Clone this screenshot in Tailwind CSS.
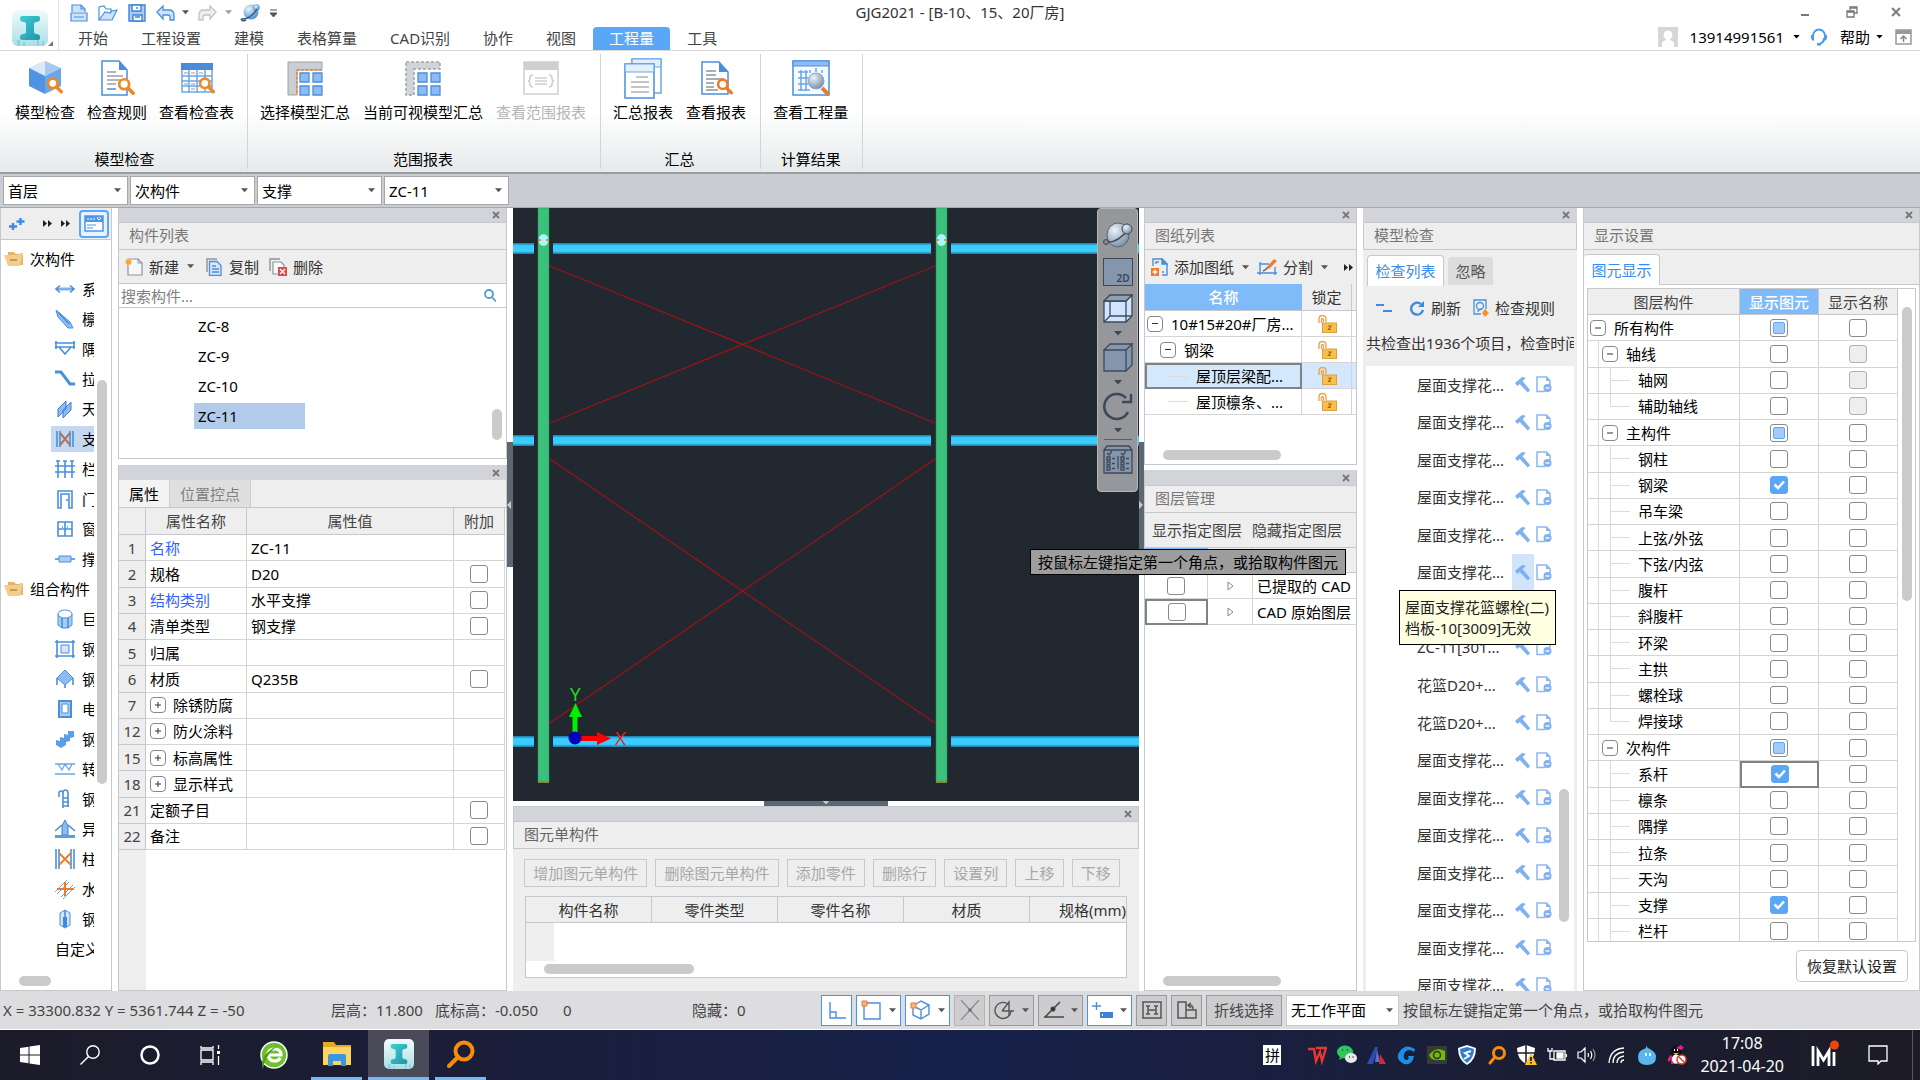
<!DOCTYPE html>
<html lang="zh-CN" class="h-full">

<head>
    <meta charset="UTF-8">
    <meta name="viewport" content="width=device-width, initial-scale=1.0">
    <title>GJG2021 - [B-10、15、20厂房]</title>
    <script src="https://cdn.jsdelivr.net/npm/@tailwindcss/browser@4"></script>
</head>

<body class="flex h-screen flex-col overflow-hidden bg-white font-['Noto_Sans','Noto_Sans_CJK_SC',sans-serif] text-[15px] leading-5 text-black whitespace-nowrap">

    <!-- Shared icons -->
    <svg class="absolute h-0 w-0" aria-hidden="true">
        <defs>
            <linearGradient id="tile" x1="0" y1="0" x2="0" y2="1">
                <stop offset="0" stop-color="#f2fbfc" />
                <stop offset="1" stop-color="#a9dfe4" />
            </linearGradient>
            <linearGradient id="teal" x1="0" y1="0" x2="1" y2="1">
                <stop offset="0" stop-color="#3fd0d4" />
                <stop offset="1" stop-color="#1f93ad" />
            </linearGradient>
            <linearGradient id="beam" x1="0" y1="0" x2="0" y2="1">
                <stop offset="0" stop-color="#1878a6" />
                <stop offset="0.25" stop-color="#3ccbff" />
                <stop offset="0.75" stop-color="#3ccbff" />
                <stop offset="1" stop-color="#1878a6" />
            </linearGradient>
            <radialGradient id="ball" cx="0.35" cy="0.3" r="0.8">
                <stop offset="0" stop-color="#eef3f8" />
                <stop offset="1" stop-color="#6f86a2" />
            </radialGradient>
            <radialGradient id="blueball" cx="0.35" cy="0.3" r="0.8">
                <stop offset="0" stop-color="#e8f5ff" />
                <stop offset="1" stop-color="#3a86c8" />
            </radialGradient>
        </defs>
        <symbol id="logo" viewBox="0 0 36 36">
            <rect width="36" height="36" rx="6" fill="url(#tile)" />
            <path d="M5 36v-6h3v6zM11 36v-4h2v4zM25 36v-8h2v8zM30 36v-5h2v5z" fill="#8fd3da" />
            <path d="M10 6h16q2 0 2 2v1q0 3-4 3-2 0-2 3v6q0 3 2 3 4 0 4 3v1q0 2-2 2H10q-2 0-2-2v-1q0-3 4-3 2 0 2-3v-6q0-3-2-3-4 0-4-3V8q0-2 2-2z" fill="url(#teal)" />
        </symbol>
        <symbol id="caret" viewBox="0 0 8 5"><path d="M0 0h8L4 4.500z" fill="currentColor" /></symbol>
        <symbol id="close" viewBox="0 0 8 8"><path d="M1 1l6 6M7 1L1 7" stroke="#777" stroke-width="1.800" /></symbol>
        <symbol id="more" viewBox="0 0 10 7"><path d="M0 0l4 3.500L0 7zM5 0l4 3.500L5 7z" fill="#222" /></symbol>
        <symbol id="lens" viewBox="0 0 20 20">
            <path d="M12.500 12.500L18 18" stroke="currentColor" stroke-width="4" stroke-linecap="round" />
            <circle cx="8" cy="8" r="5.500" fill="white" stroke="currentColor" stroke-width="3" />
        </symbol>
        <symbol id="folder" viewBox="0 0 20 16">
            <path d="M4 4V1h6l2 2h7v11h-4z" fill="#e3b56a" />
            <path d="M0 4h14l2-2h3l-3 13H4z" fill="#f2cd8b" />
            <path d="M6 9h7" stroke="#b98a3e" stroke-width="1.500" />
        </symbol>
        <symbol id="lock" viewBox="0 0 20 20">
            <path d="M2 9V5q0-3.500 3.500-3.500T9 5v3M4.500 9V5.500q0-1 1-1t1 1V8" fill="none" stroke="#e3a85a" stroke-width="1.400" />
            <rect x="5.500" y="9" width="14" height="9.500" fill="#f8bf4c" stroke="#dda03a" />
            <path d="M11 12h3l-2.500 3.500H14" fill="none" stroke="#9c6a1c" stroke-width="1.200" />
        </symbol>
        <symbol id="hammer" viewBox="0 0 18 18">
            <path d="M0 7.500L7.500 1l4 .8L8 5.500l1 1 7 8.500-2.500 2.500-7.500-8-1-1-2.500 2z" fill="#7fb0f2" />
        </symbol>
        <symbol id="docminus" viewBox="0 0 16 17">
            <path d="M9 15.500H1V1h9.500L14 4.500V9" fill="none" stroke="#8ab6f2" stroke-width="1.500" />
            <path d="M10 1v4h4z" fill="#8ab6f2" />
            <circle cx="11.500" cy="12" r="4" fill="#7fb0f2" />
            <path d="M9.500 12h4" stroke="#fff" stroke-width="1.400" />
        </symbol>
    </svg>

    <!-- Title bar and ribbon tabs -->
    <header class="flex h-[51px] shrink-0 border-b border-[#d9d9d9]">
        <div class="flex min-w-0 flex-1">
            <div class="flex w-[59px] shrink-0 items-end border-r border-[#e3e3e3] pb-1 pl-3">
                <svg class="h-9 w-9"><use href="#logo" /></svg>
                <svg class="h-[5px] w-[5px]" viewBox="0 0 5 5"><path d="M5 0v5H0z" fill="#777" /></svg>
            </div>
            <div class="flex min-w-0 flex-1 flex-col">
                <div class="flex h-[25px] items-center gap-2.5 pl-[11px]">
                    <svg class="h-[18px] w-[18px]" viewBox="0 0 18 18" fill="#cfe2fa" stroke="#4a8fdc" stroke-width="1.200"><path d="M2 8V1h9l4 4v3" /><path d="M11 1v4h4" fill="none" /><path d="M1 9h16v8H1zM4 13h10" /></svg>
                    <svg class="h-[18px] w-5" viewBox="0 0 20 18" fill="#fff" stroke="#4a8fdc" stroke-width="1.200"><path d="M1 16V3l5-1 2 3h5v3" /><path d="M1 16L7 8l5 1 2-2 5-1-5 10z" fill="#cfe2fa" /></svg>
                    <svg class="h-[18px] w-[18px]" viewBox="0 0 18 18" fill="#a9ccf5" stroke="#3f83d6" stroke-width="1.400"><path d="M1 1h16v16H1z" /><path d="M4 1h9v6H4zM5 11h9v6H5z" fill="#fff" /><path d="M9 3v2M7 13h5" /></svg>
                    <svg class="h-[18px] w-5" viewBox="0 0 20 18" fill="#cfe2fa" stroke="#4a8fdc" stroke-width="1.300"><path d="M1 8l6-6v4h6q5 0 5 5v5h-4v-3q0-2-2-2H7v4z" /></svg>
                    <svg class="-ml-1 h-[5px] w-[7px] text-gray-600"><use href="#caret" /></svg>
                    <svg class="-ml-0.5 h-[18px] w-5" viewBox="0 0 20 18" fill="#eee" stroke="#c4c4c4" stroke-width="1.300"><path d="M19 8l-6-6v4H7q-5 0-5 5v5h4v-3q0-2 2-2h5v4z" /></svg>
                    <svg class="-ml-0.5 h-[5px] w-[7px] text-gray-400"><use href="#caret" /></svg>
                    <svg class="-ml-0.5 h-5 w-5" viewBox="0 0 20 20"><circle cx="11" cy="9" r="7.500" fill="url(#blueball)" /><circle cx="16.500" cy="4.500" r="3" fill="url(#blueball)" stroke="#5f93c0" stroke-width="0.600" /><path d="M1 16Q10 17 17 6M1 16q1 3 5 1" fill="none" stroke="#3d5f80" stroke-width="1.500" /></svg>
                    <svg class="h-2 w-[7px]" viewBox="0 0 7 8"><path d="M0 1h7M0 4h7L3.500 8z" fill="#555" stroke="#555" stroke-width="1" /></svg>
                </div>
                <nav class="flex flex-1 items-end gap-px pl-[3px] text-[#444]">
                    <a href="#" class="px-4 pb-0.5">开始</a>
                    <a href="#" class="px-4 pb-0.5">工程设置</a>
                    <a href="#" class="px-4 pb-0.5">建模</a>
                    <a href="#" class="px-4 pb-0.5">表格算量</a>
                    <a href="#" class="px-4 pb-0.5">CAD识别</a>
                    <a href="#" class="px-4 pb-0.5">协作</a>
                    <a href="#" class="px-4 pb-0.5">视图</a>
                    <a href="#" class="rounded-t bg-[#5aa7f8] px-4 pb-0.5 pt-px text-white">工程量</a>
                    <a href="#" class="px-4 pb-0.5">工具</a>
                </nav>
            </div>
        </div>
        <h1 class="pt-0.5 text-[#333]">GJG2021 - [B-10、15、20厂房]</h1>
        <div class="flex flex-1 flex-col items-end">
            <div class="flex h-6 items-center gap-[33px] pr-[19px]">
                <button aria-label="最小化" class="mr-1"><svg class="h-2.5 w-2" viewBox="0 0 8 10"><path d="M0 8h8" stroke="#777" stroke-width="2" /></svg></button>
                <button aria-label="还原"><svg class="h-3 w-3" viewBox="0 0 12 12" fill="none" stroke="#777" stroke-width="1.300"><path d="M4 4V1h7v6H8" /><path d="M1 5h7v6H1zM1 6h7M4 2h7" /></svg></button>
                <button aria-label="关闭"><svg class="h-2.5 w-2.5" viewBox="0 0 10 10"><path d="M1 1l8 8M9 1L1 9" stroke="#777" stroke-width="1.800" /></svg></button>
            </div>
            <div class="flex h-[26px] items-center pr-2">
                <svg class="mr-3 h-5 w-5" viewBox="0 0 20 20"><path d="M0 0h20v20H0z" fill="#d6d6d6" /><circle cx="10" cy="8" r="4.500" fill="#fff" /><path d="M4 20v-3q0-3 4-4v-3h4v3q4 1 4 4v3z" fill="#fff" /></svg>
                13914991561
                <svg class="ml-[9px] mr-2.5 h-1 w-[7px]"><use href="#caret" /></svg>
                <svg class="mr-3 h-[18px] w-[18px]" viewBox="0 0 18 18"><path d="M3 8a6 6.500 0 0 1 12 0M14 10q0 5-5 6" fill="none" stroke="#4a9af5" stroke-width="2" /><path d="M1 7h3v6q-4-1-3-6zM17 7h-3v6q4-1 3-6zM7 15h4v2.500H7z" fill="#4a9af5" /></svg>
                帮助
                <svg class="ml-1.5 mr-3 h-1 w-[7px]"><use href="#caret" /></svg>
                <svg class="h-4 w-[17px]" viewBox="0 0 17 16"><path d="M1 1h15v14H1z" fill="#fff" stroke="#999" stroke-width="1.500" /><path d="M1 1h15v4H1z" fill="#999" /><path d="M8.500 13V7M5.500 10l3-3 3 3" fill="none" stroke="#888" stroke-width="1.500" /></svg>
            </div>
        </div>
    </header>

    <!-- Ribbon -->
    <section class="flex h-[123px] shrink-0 border-b-2 border-[#9a9da1] bg-linear-to-b from-white from-50% to-[#e6eaeb] py-[3px]">
        <div class="flex flex-col items-center border-r border-[#d2d4d6] pl-[15px] pr-[13px]">
            <div class="flex gap-3">
                <button class="flex h-[87px] flex-col items-center gap-1.5 pt-1.5">
                    <svg class="h-9 w-9" viewBox="0 0 36 36"><path d="M18 1l16 7-16 8L2 8z" fill="#a9c9f2" /><path d="M18 1v15L2 8z" fill="#dbe8fa" /><path d="M2 8l16 8v18L2 26z" fill="#4f93e3" /><path d="M34 8l-16 8v18l16-8z" fill="#6ba6ea" /><svg x="19" y="16" width="17" height="18" class="text-[#ef8a22]"><use href="#lens" /></svg></svg>
                    <span>模型检查</span>
                </button>
                <button class="flex h-[87px] flex-col items-center gap-1.5 pt-1.5">
                    <svg class="h-9 w-9" viewBox="0 0 36 36"><path d="M3 1h17l8 9v25H3z" fill="#fff" stroke="#4a8fdc" stroke-width="1.500" /><path d="M20 1v9h8z" fill="#4a8fdc" /><path d="M8 12h9M8 16h16M8 20h13M8 24h9" stroke="#9a9fa5" stroke-width="1.500" /><path d="M8 29h9" stroke="#4a8fdc" stroke-width="1.500" /><svg x="18" y="17" width="18" height="18" class="text-[#ef8a22]"><use href="#lens" /></svg></svg>
                    <span>检查规则</span>
                </button>
                <button class="flex h-[87px] flex-col items-center gap-1.5 pt-1.5">
                    <svg class="h-9 w-9" viewBox="0 0 36 36"><path d="M3 4h30v28H3z" fill="#fff" stroke="#6ba6ea" stroke-width="1.500" /><path d="M2 3h32v7H2z" fill="#4a8bd8" /><path d="M3 16h30M3 21h30M3 26h30M10 10v22M18 10v22M26 10v22" stroke="#6ba6ea" stroke-width="1.500" /><path d="M5 13h4M12 13h4M20 13h4M5 24h4M12 24h4M12 29h4" stroke="#999" /><svg x="19" y="16" width="17" height="18" class="text-[#ef8a22]"><use href="#lens" /></svg></svg>
                    <span>查看检查表</span>
                </button>
            </div>
            <span class="pt-2">模型检查</span>
        </div>
        <div class="flex flex-col items-center border-r border-[#d2d4d6] pl-3 pr-3.5">
            <div class="flex gap-[13px]">
                <button class="flex h-[87px] flex-col items-center gap-1.5 pt-1.5">
                    <svg class="h-9 w-9" viewBox="0 0 36 36"><path d="M1 2h34v8H10v25H1z" fill="#c9ced3" stroke="#9aa3aa" /><path d="M35 10H10v25" fill="none" stroke="#ee7f31" stroke-width="1.500" stroke-dasharray="3 1.500" /><path d="M13 13h9v9h-9zM26 13h9v9h-9zM13 26h9v9h-9zM26 26h9v9h-9z" fill="#8dbcf4" stroke="#4a8fdc" stroke-width="1.300" /></svg>
                    <span>选择模型汇总</span>
                </button>
                <button class="flex h-[87px] flex-col items-center gap-1.5 pt-1.5">
                    <svg class="h-9 w-9" viewBox="0 0 36 36"><path d="M1 2h34v7H9v26H1z" fill="#d1d5d9" stroke="#9aa3aa" stroke-width="1.500" stroke-dasharray="3 2" /><path d="M13 13h9v9h-9zM26 13h9v9h-9zM13 26h9v9h-9zM26 26h9v9h-9z" fill="#8dbcf4" stroke="#4a8fdc" stroke-width="1.300" /></svg>
                    <span>当前可视模型汇总</span>
                </button>
                <button disabled class="flex h-[87px] flex-col items-center gap-1.5 pt-1.5 text-[#b5b5b5]">
                    <svg class="h-9 w-9" viewBox="0 0 36 36"><path d="M1 2h34v32H1z" fill="#fff" stroke="#cfcfcf" stroke-width="1.500" /><path d="M1 2h34v8H1z" fill="#cfcfcf" /><path d="M10 15q-3 0-3 3t-2 3q2 0 2 3t3 3M26 15q3 0 3 3t2 3q-2 0-2 3t-3 3M12 18h12M12 21h12M12 24h12" fill="none" stroke="#cfcfcf" stroke-width="1.600" /></svg>
                    <span>查看范围报表</span>
                </button>
            </div>
            <span class="pt-2">范围报表</span>
        </div>
        <div class="flex flex-col items-center border-r border-[#d2d4d6] pl-3 pr-3.5">
            <div class="flex gap-[13px]">
                <button class="flex h-[87px] flex-col items-center gap-[3px] pt-1">
                    <svg class="h-[41px] w-[38px]" viewBox="0 0 38 41"><path d="M8 1h29v34H8z" fill="#fff" stroke="#6ba6ea" stroke-width="1.500" /><path d="M8 1h29v8H8z" fill="#e4effc" stroke="#6ba6ea" stroke-width="1.200" /><path d="M1 6h29v34H1z" fill="#fff" stroke="#4a8fdc" stroke-width="1.500" /><path d="M1 6h29v8H1z" fill="#e4effc" stroke="#6ba6ea" stroke-width="1.200" /><path d="M12 19h12M7 24h18M7 29h18M7 34h18" stroke="#b0b3b7" stroke-width="1.500" /></svg>
                    <span>汇总报表</span>
                </button>
                <button class="flex h-[87px] flex-col items-center gap-1.5 pt-1.5">
                    <svg class="h-9 w-9" viewBox="0 0 36 36"><path d="M4 2h17l9 10v22H4z" fill="#fff" stroke="#4a8fdc" stroke-width="1.500" /><path d="M21 2v10h9z" fill="#4a8fdc" /><path d="M8 11h10M8 15h10M8 19h18M8 23h8M8 27h8M8 30h12" stroke="#8f959b" stroke-width="1.500" /><svg x="18" y="17" width="17" height="18" class="text-[#f07a28]"><use href="#lens" /></svg></svg>
                    <span>查看报表</span>
                </button>
            </div>
            <span class="pt-2">汇总</span>
        </div>
        <div class="flex flex-col items-center border-r border-[#d2d4d6] pl-3 pr-3.5">
            <button class="flex h-[87px] flex-col items-center gap-1.5 pt-1.5">
                <svg class="h-9 w-[38px]" viewBox="0 0 38 36"><path d="M1 1h36v34H1z" fill="#f6faff" stroke="#4a8fdc" stroke-width="1.500" /><path d="M1 1h36v5H1z" fill="#8dbcf4" stroke="#4a8fdc" /><path d="M6 12h10M6 18h10M6 24h10M6 30h12M9 10v21M14 10v21M18 10v3M24 8v4M30 10v3" stroke="#6ba6ea" stroke-width="1.500" /><path d="M30 28l7 7" stroke="#e07e38" stroke-width="4" /><circle cx="24" cy="21" r="8" fill="url(#ball)" stroke="#7ea9dd" /></svg>
                <span>查看工程量</span>
            </button>
            <span class="pt-2">计算结果</span>
        </div>
    </section>

    <!-- Floor / component selectors -->
    <section class="flex h-[34px] shrink-0 items-center gap-0.5 border-b border-[#a5a8ac] bg-[#c9ccd1] pl-[3px]">
        <div class="relative"><select aria-label="楼层" class="h-[29px] w-[125px] appearance-none border border-[#a5a8ac] bg-white pl-1"><option>首层</option></select><svg class="pointer-events-none absolute right-[7px] top-3 h-[5px] w-[7px] text-[#555]"><use href="#caret" /></svg></div>
        <div class="relative"><select aria-label="构件大类" class="h-[29px] w-[125px] appearance-none border border-[#a5a8ac] bg-white pl-1"><option>次构件</option></select><svg class="pointer-events-none absolute right-[7px] top-3 h-[5px] w-[7px] text-[#555]"><use href="#caret" /></svg></div>
        <div class="relative"><select aria-label="构件类型" class="h-[29px] w-[125px] appearance-none border border-[#a5a8ac] bg-white pl-1"><option>支撑</option></select><svg class="pointer-events-none absolute right-[7px] top-3 h-[5px] w-[7px] text-[#555]"><use href="#caret" /></svg></div>
        <div class="relative"><select aria-label="构件" class="h-[29px] w-[125px] appearance-none border border-[#a5a8ac] bg-white pl-1"><option>ZC-11</option></select><svg class="pointer-events-none absolute right-[7px] top-3 h-[5px] w-[7px] text-[#555]"><use href="#caret" /></svg></div>
    </section>

    <main class="relative flex min-h-0 flex-1 bg-white">

        <!-- Component type tree -->
        <aside class="relative mr-1.5 flex w-28 shrink-0 flex-col border border-t-0 border-[#c5c8cd]">
            <div class="flex h-8 shrink-0 items-center border-b border-[#c5c8cd] bg-[#eee] pl-2">
                <svg class="mr-[18px] h-3.5 w-4" viewBox="0 0 16 14"><path d="M0 9.500h8M4 6v7M7.500 4.500h8M11.500 1v7" stroke="#3f8ae0" stroke-width="2.400" /></svg>
                <svg class="mr-2 h-[7px] w-2.5"><use href="#more" /></svg>
                <svg class="mr-2 h-[7px] w-2.5"><use href="#more" /></svg>
                <button aria-label="列表视图" class="flex h-7 w-[30px] items-center justify-center rounded border-2 border-[#5aa7f8] bg-[#e9f3fe]">
                    <svg class="h-[17px] w-5" viewBox="0 0 20 17"><path d="M1 1h18v15H1z" fill="#fff" stroke="#4a97f0" stroke-width="1.500" /><path d="M1 1h18v6H1z" fill="#4a97f0" /><path d="M3 4h2M6 4h2M9 4h2M13 3h4l-2 2z" stroke="#fff" /><path d="M3 10h9M3 13h6" stroke="#4a97f0" stroke-width="1.200" /></svg>
                </button>
            </div>
            <ul id="typeTree" class="flex w-[93px] flex-col overflow-hidden pt-1"></ul>
            <div class="absolute right-1 top-[172px] h-[404px] w-2.5 rounded-full bg-[#cacaca]"></div>
            <div class="absolute bottom-1 left-[18px] h-2.5 w-8 rounded-full bg-[#cacaca]"></div>
        </aside>

        <!-- Component list and properties -->
        <div class="flex w-[389px] shrink-0 flex-col gap-1.5">
            <section class="flex h-[251px] shrink-0 flex-col border border-t-0 border-[#c5c8cd]">
                <div class="flex h-3.5 shrink-0 items-center justify-end bg-[#d2d4da] pr-1.5"><svg class="h-2 w-2"><use href="#close" /></svg></div>
                <h2 class="h-7 shrink-0 border-y border-[#c5c8cd] bg-[#eee] px-2.5 pt-0.5 text-[#777]">构件列表</h2>
                <div class="flex h-[34px] shrink-0 items-center border-b border-[#c5c8cd] bg-[#eee] pl-1.5 text-[#333]">
                    <button class="flex items-center gap-1.5"><svg class="h-[18px] w-[18px]" viewBox="0 0 18 18"><path d="M3 1h10l4 4v12H3z" fill="#f7f8f9" stroke="#8b949c" stroke-width="1.200" /><path d="M13 1v4h4" fill="none" stroke="#8b949c" /><circle cx="3.500" cy="4" r="3" fill="#f9a63a" stroke="#fbd095" stroke-dasharray="1 1" /></svg>新建</button>
                    <svg class="ml-2 mr-3 h-[5px] w-[7px] text-[#555]"><use href="#caret" /></svg>
                    <button class="mr-2.5 flex items-center gap-[7px]"><svg class="h-[18px] w-4" viewBox="0 0 16 18"><path d="M1 14V1h10" fill="none" stroke="#8b949c" stroke-width="1.400" /><path d="M3.500 3.500H11l4 4v10H3.500z" fill="#d5e6fb" stroke="#4a8fdc" stroke-width="1.300" /><path d="M6 8h4M6 11h7M6 14h7" stroke="#4a8fdc" stroke-width="1.300" /></svg>复制</button>
                    <button class="flex items-center gap-1.5"><svg class="h-[18px] w-[18px]" viewBox="0 0 18 18"><path d="M1 13V1h10" fill="none" stroke="#8b949c" stroke-width="1.400" /><path d="M4 4h8l3 3v9H4z" fill="#f7f8f9" stroke="#8b949c" stroke-width="1.200" /><path d="M9 9h9v9H9z" fill="#dc4b4b" /><path d="M11 11l5 5M16 11l-5 5" stroke="#fff" stroke-width="1.400" /></svg>删除</button>
                </div>
                <label class="flex h-6 shrink-0 items-center border-b border-[#c5c8cd] pl-0.5 pr-2.5">
                    <input type="text" aria-label="搜索构件" placeholder="搜索构件..." class="min-w-0 flex-1 outline-none placeholder:text-[#808080]">
                    <svg class="h-[13px] w-3" viewBox="0 0 12 13" fill="none" stroke="#4a9fd0" stroke-width="1.800"><circle cx="5" cy="5" r="4" /><path d="M8 8l4 4.500" /></svg>
                </label>
                <div class="flex flex-1 justify-between overflow-hidden pr-1">
                    <ul class="ml-[75px] w-[111px] pt-[3px]">
                        <li class="flex h-[30px] items-center pl-1">ZC-8</li>
                        <li class="flex h-[30px] items-center pl-1">ZC-9</li>
                        <li class="flex h-[30px] items-center pl-1">ZC-10</li>
                        <li class="my-0.5 flex h-[26px] items-center bg-[#b2cbeb] pl-1">ZC-11</li>
                    </ul>
                    <div class="mb-[18px] h-[31px] w-2.5 self-end rounded-full bg-[#cacaca]"></div>
                </div>
            </section>

            <section class="flex min-h-0 flex-1 flex-col border border-t-0 border-[#c5c8cd]">
                <div class="flex h-[15px] shrink-0 items-center justify-end bg-[#d2d4da] pr-1.5"><svg class="h-2 w-2"><use href="#close" /></svg></div>
                <div class="flex h-7 shrink-0 border-b border-[#c5c8cd] bg-[#eee]">
                    <button class="w-[50px] bg-[#f3f3f3]">属性</button>
                    <button class="w-[82px] border-x border-[#d0d0d0] bg-[#dfdfdf] text-[#808080]">位置控点</button>
                </div>
                <div class="flex-1 bg-linear-to-r from-[#eee] from-[27px] to-white to-[27px]">
                    <table class="h-[342px] w-[386px] table-fixed border-separate border-spacing-0 bg-white">
                        <thead class="bg-[#eee] text-[#444]">
                            <tr class="h-[27px]">
                                <th class="w-[27px] border-b border-r border-[#c5c8cd]"></th>
                                <th class="w-[101px] border-b border-r border-[#c5c8cd] font-normal">属性名称</th>
                                <th class="border-b border-r border-[#c5c8cd] font-normal">属性值</th>
                                <th class="w-[51px] border-b border-r border-[#c5c8cd] font-normal">附加</th>
                            </tr>
                        </thead>
                        <tbody id="props"></tbody>
                    </table>
                </div>
            </section>
        </div>

        <!-- Drawing canvas and detail table -->
        <div class="flex min-w-0 flex-1 flex-col">
            <div class="flex min-h-0 flex-1">
                <div class="flex w-1.5 items-center"><div class="flex h-[125px] w-1.5 items-center bg-[#5d6771]"><svg class="h-2 w-1" viewBox="0 0 4 8"><path d="M4 0v8L0 4z" fill="#c9ccd1" /></svg></div></div>
                <div class="relative min-w-0 flex-1 bg-[#222830]">
                    <svg class="absolute inset-0 h-full w-full">
                        <g fill="url(#beam)">
                            <rect x="0" y="35" width="21" height="11" /><rect x="40" y="35" width="378" height="11" /><rect x="438" y="35" width="190" height="11" />
                            <rect x="0" y="227" width="21" height="11" /><rect x="40" y="227" width="378" height="11" /><rect x="438" y="227" width="190" height="11" />
                            <rect x="0" y="528" width="21" height="11" /><rect x="40" y="528" width="378" height="11" /><rect x="438" y="528" width="190" height="11" />
                        </g>
                        <path d="M37 58L422 215M422 58L37 215M37 251L422 515M422 251L37 515" stroke="#9e1216" stroke-width="1.200" />
                        <path d="M25 0h11v574H25zM423 0h11v574h-11z" fill="#3cc17c" stroke="#279157" stroke-width="0.500" />
                        <path d="M25 574h11M423 574h11" stroke="#8a8a2a" stroke-width="2" />
                        <g fill="#aef5f5"><ellipse cx="30.500" cy="32" rx="5" ry="6" /><ellipse cx="428.500" cy="32" rx="5" ry="6" /></g>
                        <path d="M25 32h3M33 32h3M423 32h3M431 32h3" stroke="#c8801f" stroke-width="1.500" />
                        <path d="M62 530V509" stroke="#00f000" stroke-width="5" /><path d="M56 509h13l-6.500-14z" fill="#00f000" />
                        <path d="M62 530.500h23" stroke="#f00" stroke-width="5" /><path d="M84 524v13l14-6.500z" fill="#f00" />
                        <circle cx="62" cy="530" r="6.500" fill="#0000b8" />
                        <text x="57" y="493" font-size="19" fill="#1ce01c" class="font-['Open_Sans']">Y</text>
                        <text x="102" y="537" font-size="19" fill="#ee1c24" class="font-['Open_Sans']">X</text>
                    </svg>
                    <!-- View toolbar -->
                    <div class="absolute right-px top-0 flex h-[284px] w-[41px] flex-col items-center rounded-sm border border-[#b3b5b8] bg-[#95979b] pt-3 text-[#3c4552]">
                        <svg class="mb-2.5 h-[27px] w-[30px]" viewBox="0 0 30 27" stroke="#3f4956"><ellipse cx="15" cy="14" rx="11" ry="12" fill="url(#ball)" stroke="#5a6674" /><path d="M2 21Q14 23 26 8" fill="none" stroke-width="1.500" /><circle cx="24" cy="8" r="5" fill="url(#ball)" /><circle cx="3" cy="21" r="2.500" fill="#888" /></svg>
                        <button class="mb-2 flex h-7 w-[30px] items-end justify-end border border-[#3f4956] bg-[#8496ae] pb-px pr-0.5 text-[10px] font-semibold leading-3">2D</button>
                        <svg class="h-[29px] w-[30px]" viewBox="0 0 30 29" fill="#cfe5ff" stroke="#3f4956" stroke-width="1.300"><path d="M1 7h22v21H1zM23 7l6-6v21l-6 6z" /><path d="M1 7l6-6h22l-6 6z" fill="#8fa0b6" /><path d="M7 7v15h22M7 22l-6 6" fill="none" /></svg>
                        <svg class="mb-[7px] mt-2 h-[5px] w-2"><use href="#caret" /></svg>
                        <svg class="h-[29px] w-[30px]" viewBox="0 0 30 29" fill="#8496ae" stroke="#3f4956" stroke-width="1.300"><path d="M1 7h22v21H1zM23 7l6-6v21l-6 6zM1 7l6-6h22l-6 6z" /></svg>
                        <svg class="mb-[7px] mt-2 h-[5px] w-2"><use href="#caret" /></svg>
                        <svg class="h-[29px] w-[30px]" viewBox="0 0 30 29" fill="none" stroke="#3f4956" stroke-width="2.600"><path d="M25 20A12.500 12.500 0 1 1 23 6" /><path d="M28 2v8h-9" stroke-width="2.400" /></svg>
                        <svg class="mb-1.5 mt-[7px] h-[5px] w-2"><use href="#caret" /></svg>
                        <div class="mb-[5px] h-px w-7 bg-[#5a5f66]"></div>
                        <svg class="h-[29px] w-[30px]" viewBox="0 0 30 29" fill="#8496ae" stroke="#3f4956" stroke-width="1.300"><path d="M1 5l3-4h22l3 4v23H1zM1 5h28" /><path d="M4 8l2 2 3-4M18 8l2 2 3-4M15 11v13" fill="none" /><path d="M4 12h3v3H4zM4 17h3v3H4zM4 22h3v3H4zM18 12h3v3h-3zM18 17h3v3h-3zM18 22h3v3h-3zM9 13.500h3M9 18.500h3M9 23.500h3M23 13.500h3M23 18.500h3M23 23.500h3" fill="none" /></svg>
                    </div>
                </div>
                <div class="flex w-[5px] items-center"><div class="flex h-[125px] w-[5px] items-center bg-[#5d6771]"><svg class="h-2 w-1" viewBox="0 0 4 8"><path d="M0 0v8l4-4z" fill="#c9ccd1" /></svg></div></div>
            </div>
            <div class="mx-auto flex h-[5px] w-[124px] shrink-0 justify-center bg-[#5d6771]"><svg class="h-1 w-2 text-[#c9ccd1]"><use href="#caret" /></svg></div>
            <section class="ml-1.5 mr-[5px] flex h-[185px] shrink-0 flex-col bg-[#eee]">
                <div class="flex h-[15px] shrink-0 items-center justify-end border border-b-0 border-[#c5c8cd] bg-[#d2d4da] pr-1.5"><svg class="h-2 w-2"><use href="#close" /></svg></div>
                <h2 class="h-7 shrink-0 border border-[#c5c8cd] px-2.5 pt-0.5 text-[#666]">图元单构件</h2>
                <div class="flex gap-2 px-[11px] pt-2.5 text-[#a8a8a8]">
                    <button disabled class="h-7 flex-auto border border-[#c9c9c9]">增加图元单构件</button>
                    <button disabled class="h-7 flex-auto border border-[#c9c9c9]">删除图元单构件</button>
                    <button disabled class="h-7 flex-auto border border-[#c9c9c9]">添加零件</button>
                    <button disabled class="h-7 flex-auto border border-[#c9c9c9]">删除行</button>
                    <button disabled class="h-7 flex-auto border border-[#c9c9c9]">设置列</button>
                    <button disabled class="h-7 flex-auto border border-[#c9c9c9]">上移</button>
                    <button disabled class="mr-2 h-7 flex-auto border border-[#c9c9c9]">下移</button>
                </div>
                <div class="mx-3 mb-[13px] mt-[9px] flex min-h-0 flex-1 flex-col overflow-hidden border border-[#c5c8cd] bg-white">
                    <table class="w-[756px] table-fixed border-separate border-spacing-0">
                        <thead>
                            <tr class="h-[26px] bg-[#eee] text-[#333]">
                                <th class="w-[126px] border-b border-r border-[#c5c8cd] font-normal">构件名称</th>
                                <th class="w-[126px] border-b border-r border-[#c5c8cd] font-normal">零件类型</th>
                                <th class="w-[126px] border-b border-r border-[#c5c8cd] font-normal">零件名称</th>
                                <th class="w-[126px] border-b border-r border-[#c5c8cd] font-normal">材质</th>
                                <th class="w-[126px] border-b border-r border-[#c5c8cd] font-normal">规格(mm)</th>
                                <th class="border-b border-[#c5c8cd]"></th>
                            </tr>
                        </thead>
                    </table>
                    <div class="h-[38px] w-7 bg-[#eee]"></div>
                    <div class="ml-[18px] mt-[3px] h-2.5 w-[150px] shrink-0 rounded-full bg-[#cacaca]"></div>
                </div>
            </section>
        </div>

        <!-- Drawing list and layer manager -->
        <div class="mr-1.5 flex w-[213px] shrink-0 flex-col gap-[5px]">
            <section class="flex h-[257px] shrink-0 flex-col border border-t-0 border-[#c5c8cd]">
                <div class="flex h-3.5 shrink-0 items-center justify-end bg-[#d2d4da] pr-1.5"><svg class="h-2 w-2"><use href="#close" /></svg></div>
                <h2 class="h-7 shrink-0 border-y border-[#c5c8cd] bg-[#eee] px-2.5 pt-0.5 text-[#777]">图纸列表</h2>
                <div class="flex h-[34px] shrink-0 items-center bg-[#eee] pl-1.5 text-[#333]">
                    <button class="flex items-center gap-1.5"><svg class="h-[18px] w-[17px]" viewBox="0 0 17 18" fill="none" stroke="#4a8fdc" stroke-width="1.400"><path d="M2 8V1h9l5 5v11h-5M5 6V4h3M13 14h-2" /><path d="M11 1v5h5z" fill="#4a8fdc" /><path d="M0 10h8v8H0z" fill="#f07a28" stroke="none" /><path d="M4 11.500v5M1.500 14h5" stroke="#fff" /></svg>添加图纸</button>
                    <svg class="ml-2 mr-2 h-[5px] w-[7px] text-[#555]"><use href="#caret" /></svg>
                    <button class="flex items-center gap-1.5"><svg class="h-[18px] w-5" viewBox="0 0 20 18" fill="none" stroke="#4a8fdc" stroke-width="1.400"><path d="M3 6h9M3 4v13M0 15h20M18 9v8" /><path d="M6 13q3-1 5-4" stroke="#666" /><path d="M10 9l7-8 3 2-8 8z" fill="#f07a28" stroke="none" /></svg>分割</button>
                    <svg class="ml-2 mr-4 h-[5px] w-[7px] text-[#555]"><use href="#caret" /></svg>
                    <svg class="h-[7px] w-2.5"><use href="#more" /></svg>
                </div>
                <table class="w-full table-fixed border-separate border-spacing-0">
                    <thead>
                        <tr class="h-[27px]">
                            <th class="w-[157px] border-b border-[#c5c8cd] bg-[#80bbf9] font-medium text-white">名称</th>
                            <th class="border-b border-r border-[#c5c8cd] bg-[#eee] font-normal text-[#333]">锁定</th>
                            <th class="w-1 border-b border-[#c5c8cd] bg-[#eee]"></th>
                        </tr>
                    </thead>
                    <tbody>
                        <tr class="h-[26px]">
                            <td class="border-b border-r border-[#d4d4d4] pl-0.5"><span class="flex items-center gap-2"><i class="flex h-4 w-4 items-center justify-center rounded-sm border border-[#888]"><b class="h-px w-1.5 bg-[#333]"></b></i>10#15#20#厂房...</span></td>
                            <td class="border-b border-r border-[#d4d4d4]"><svg class="mx-auto h-5 w-5"><use href="#lock" /></svg></td>
                            <td class="border-b border-[#d4d4d4]"></td>
                        </tr>
                        <tr class="h-[26px]">
                            <td class="border-b border-r border-[#d4d4d4] pl-[15px]"><span class="flex items-center gap-2"><i class="flex h-4 w-4 items-center justify-center rounded-sm border border-[#888]"><b class="h-px w-1.5 bg-[#333]"></b></i>钢梁</span></td>
                            <td class="border-b border-r border-[#d4d4d4]"><svg class="mx-auto h-5 w-5"><use href="#lock" /></svg></td>
                            <td class="border-b border-[#d4d4d4]"></td>
                        </tr>
                        <tr class="h-[26px] bg-[#d4e8fd]">
                            <td class="border-2 border-[#7f8387] pl-[21px]"><span class="flex items-center gap-2"><b class="h-px w-5 bg-[#dcdcdc]"></b>屋顶层梁配...</span></td>
                            <td class="border-b border-r border-[#d4d4d4]"><svg class="mx-auto h-5 w-5"><use href="#lock" /></svg></td>
                            <td class="border-b border-[#d4d4d4]"></td>
                        </tr>
                        <tr class="h-[26px]">
                            <td class="border-b border-r border-[#d4d4d4] pl-[23px]"><span class="flex items-center gap-2"><b class="h-px w-5 bg-[#dcdcdc]"></b>屋顶檩条、...</span></td>
                            <td class="border-b border-r border-[#d4d4d4]"><svg class="mx-auto h-5 w-5"><use href="#lock" /></svg></td>
                            <td class="border-b border-[#d4d4d4]"></td>
                        </tr>
                    </tbody>
                </table>
                <div class="mb-1 ml-[18px] mt-auto h-2.5 w-[118px] rounded-full bg-[#cacaca]"></div>
            </section>

            <section class="flex min-h-0 flex-1 flex-col border border-t-0 border-[#c5c8cd]">
                <div class="flex h-[15px] shrink-0 items-center justify-end bg-[#d2d4da] pr-1.5"><svg class="h-2 w-2"><use href="#close" /></svg></div>
                <h2 class="h-7 shrink-0 border-y border-[#c5c8cd] bg-[#eee] px-2.5 pt-0.5 text-[#777]">图层管理</h2>
                <div class="flex h-[34px] shrink-0 items-center gap-2.5 bg-[#eee] pl-[7px] text-[#444]">
                    <button>显示指定图层</button>
                    <button>隐藏指定图层</button>
                </div>
                <div class="overflow-hidden">
                    <table class="w-full table-fixed border-separate border-spacing-0">
                        <thead>
                            <tr class="h-[26px] bg-[#eee]">
                                <th class="w-[63px] border-b border-t border-[#c5c8cd] bg-[#80bbf9]"></th>
                                <th class="w-[45px] border-b border-r border-t border-[#c5c8cd]"></th>
                                <th class="border-b border-t border-[#c5c8cd]"></th>
                            </tr>
                        </thead>
                        <tbody>
                            <tr class="h-[26px]">
                                <td class="border-b border-r border-[#d4d4d4]"><input type="checkbox" aria-label="已提取的 CAD 图层" class="mx-auto block h-[18px] w-[18px] appearance-none rounded-[3px] border border-[#8a8a8a]"></td>
                                <td class="border-b border-r border-[#d4d4d4]"><svg class="mx-auto h-2.5 w-[7px]" viewBox="0 0 7 10"><path d="M1 1l5 4-5 4z" fill="none" stroke="#888" /></svg></td>
                                <td class="border-b border-[#d4d4d4] pl-1">已提取的 CAD</td>
                            </tr>
                            <tr class="h-[26px]">
                                <td class="border-2 border-[#7f8387]"><input type="checkbox" aria-label="CAD 原始图层" class="mx-auto block h-[18px] w-[18px] appearance-none rounded-[3px] border border-[#8a8a8a]"></td>
                                <td class="border-b border-r border-[#d4d4d4]"><svg class="mx-auto h-2.5 w-[7px]" viewBox="0 0 7 10"><path d="M1 1l5 4-5 4z" fill="none" stroke="#888" /></svg></td>
                                <td class="border-b border-[#d4d4d4] pl-1">CAD 原始图层</td>
                            </tr>
                        </tbody>
                    </table>
                </div>
                <div class="mb-1 ml-[18px] mt-auto h-2.5 w-[118px] rounded-full bg-[#cacaca]"></div>
            </section>
        </div>

        <!-- Model check -->
        <section class="relative mr-1.5 flex w-[214px] shrink-0 flex-col bg-[#eee]">
            <div class="flex h-3.5 shrink-0 items-center justify-end bg-[#d2d4da] pr-[7px]"><svg class="h-2 w-2"><use href="#close" /></svg></div>
            <h2 class="h-7 shrink-0 border border-[#c5c8cd] px-2.5 pt-0.5 text-[#777]">模型检查</h2>
            <div class="flex h-[41px] shrink-0 items-end gap-1 px-1">
                <button class="h-[31px] w-[77px] self-center rounded-t border border-b-0 border-[#c5c8cd] bg-white text-[#3a8df0]">检查列表</button>
                <button class="h-7 w-[45px] self-center rounded-t bg-[#dcdcdc] text-[#555]">忽略</button>
            </div>
            <div class="flex h-[42px] shrink-0 items-center pb-2 pl-[13px] text-[#333]">
                <svg class="mr-[18px] h-2.5 w-4" viewBox="0 0 16 10"><path d="M0 2h8M7 8h9" stroke="#3f8ae0" stroke-width="2.200" /></svg>
                <button class="mr-3 flex items-center gap-1.5"><svg class="h-4 w-[15px]" viewBox="0 0 15 16" fill="none" stroke="#3f8ae0" stroke-width="2.400"><path d="M13 10A6 6 0 1 1 11 4" /><path d="M14 1v6H8z" fill="#3f8ae0" stroke="none" /></svg>刷新</button>
                <button class="flex items-center gap-1.5"><svg class="h-[18px] w-4" viewBox="0 0 16 18" fill="none" stroke="#4a8fdc" stroke-width="1.300"><path d="M8 15H1V1h12v9" /><circle cx="7" cy="7" r="3.500" /><path d="M5 13q0-3 4-3" /><path d="M12 10l4 4-4 4-3-4z" fill="#f5922d" stroke="none" /></svg>检查规则</button>
            </div>
            <p class="ml-[3px] mr-[3px] h-[33px] shrink-0 overflow-hidden text-[#333]">共检查出1936个项目，检查时间</p>
            <div class="ml-[3px] mr-[3px] min-h-0 flex-1 overflow-hidden bg-white">
                <ul id="checks" class="grid h-[638px] auto-rows-fr text-[#333]"></ul>
            </div>
            <div class="absolute bottom-[69px] right-2 h-[133px] w-2.5 rounded-full bg-[#cacaca]"></div>
            <div class="absolute left-9 top-[382px] z-10 h-[55px] w-[157px] border border-black bg-[#ffffe1] px-[5px] py-1.5 leading-[21px] text-[#222]">屋面支撑花篮螺栓(二)<br>档板-10[3009]无效</div>
        </section>

        <!-- Display settings -->
        <section class="flex w-[337px] shrink-0 flex-col border border-t-0 border-[#c5c8cd]">
            <div class="flex h-3.5 shrink-0 items-center justify-end bg-[#d2d4da] pr-1.5"><svg class="h-2 w-2"><use href="#close" /></svg></div>
            <h2 class="h-7 shrink-0 border-y border-[#c5c8cd] bg-[#eee] px-2.5 pt-0.5 text-[#777]">显示设置</h2>
            <div class="flex h-[35px] shrink-0 items-end border-b border-[#c5c8cd] bg-[#eee]">
                <button class="-mb-px h-[31px] w-[76px] rounded-t border-r border-t border-[#c5c8cd] bg-white text-[#3a8df0]">图元显示</button>
            </div>
            <div class="mx-[3px] mt-[3px] flex h-[654px] min-h-0 shrink overflow-hidden border border-[#c5c8cd]">
                <table class="h-[656px] min-w-0 flex-1 table-fixed border-separate border-spacing-0">
                    <thead>
                        <tr class="h-[26px] text-[#444]">
                            <th class="border-b border-r border-[#c5c8cd] bg-[#eee] font-normal">图层构件</th>
                            <th class="w-[79px] border-b border-r border-[#c5c8cd] bg-[#80bbf9] font-medium text-white">显示图元</th>
                            <th class="w-[79px] border-b border-r border-[#c5c8cd] bg-[#eee] font-normal">显示名称</th>
                        </tr>
                    </thead>
                    <tbody id="display"></tbody>
                </table>
                <div class="w-[17px] shrink-0 pl-1 pt-[18px]"><div class="h-[294px] w-2.5 rounded-full bg-[#cacaca]"></div></div>
            </div>
            <button class="mb-2 mr-[11px] mt-auto h-8 w-28 shrink-0 self-end rounded border border-[#c9c9c9] text-[#222]">恢复默认设置</button>
        </section>

        <!-- Cursor hint -->
        <div class="absolute left-[1030px] top-[341px] h-[26px] border border-black bg-[#9d9d9d] px-[7px] pt-0.5">按鼠标左键指定第一个角点，或拾取构件图元</div>
    </main>

    <!-- Status bar -->
    <section class="flex h-[39px] shrink-0 items-center border-b border-white bg-[#dddddf] pl-[3px] text-[#444]">
        <span class="w-[328px]">X = 33300.832 Y = 5361.744 Z = -50</span>
        <span class="w-[104px]">层高：11.800</span>
        <span class="w-[128px]">底标高：-0.050</span>
        <span class="w-[129px]">0</span>
        <span class="w-[129px] flex-none">隐藏：0</span>
        <div class="flex items-center gap-1">
            <button aria-label="正交" class="flex h-[31px] w-[31px] items-center justify-center border border-[#3f97f0] bg-white"><svg class="h-5 w-5" viewBox="0 0 20 20" fill="none" stroke="#4a8fdc" stroke-width="1.400"><path d="M3 2v16h16M3 12h6v6" /></svg></button>
            <button aria-label="对象捕捉" class="flex h-[31px] w-[45px] items-center justify-between border border-[#3f97f0] bg-white px-1"><svg class="h-5 w-[22px]" viewBox="0 0 22 20"><path d="M3 3h16v16H3z" fill="none" stroke="#4a8fdc" stroke-width="1.400" /><path d="M1 1h5v5H1z" fill="#f9b27c" stroke="#f07a28" /></svg><svg class="h-[5px] w-[7px] text-[#555]"><use href="#caret" /></svg></button>
            <button aria-label="三维捕捉" class="flex h-[31px] w-[45px] items-center justify-between border border-[#3f97f0] bg-white px-1"><svg class="h-5 w-[22px]" viewBox="0 0 22 20"><path d="M3 6l8-5 8 4v9l-8 5-8-4zM3 6l8 4 8-5M11 10v9" fill="none" stroke="#4a8fdc" stroke-width="1.400" /><path d="M1 3h5v5H1z" fill="#f9b27c" stroke="#f07a28" /></svg><svg class="h-[5px] w-[7px] text-[#555]"><use href="#caret" /></svg></button>
            <button aria-label="交点" class="flex h-[31px] w-[31px] items-center justify-center border border-[#b5b5b5] bg-[#cdcdcf]"><svg class="h-5 w-5" viewBox="0 0 20 20" stroke="#888" stroke-width="1.200"><path d="M1 0l18 20M19 0L1 20" /><circle cx="10" cy="10" r="1.500" fill="#666" /></svg></button>
            <button aria-label="圆角" class="flex h-[31px] w-[45px] items-center justify-between border border-[#9a9a9a] bg-[#cdcdcf] px-1"><svg class="h-5 w-[22px]" viewBox="0 0 22 20" fill="none" stroke="#555" stroke-width="1.400"><path d="M13 3.500A8 8 0 1 0 17 11" /><path d="M8 11h12M8 11l7-9v14" /></svg><svg class="h-[5px] w-[7px] text-[#555]"><use href="#caret" /></svg></button>
            <button aria-label="角度" class="flex h-[31px] w-[45px] items-center justify-between border border-[#9a9a9a] bg-[#cdcdcf] px-1"><svg class="h-5 w-[22px]" viewBox="0 0 22 20" fill="none" stroke="#444" stroke-width="1.500"><path d="M17 2L2 17h19" /><circle cx="10" cy="9" r="1.800" fill="#222" /></svg><svg class="h-[5px] w-[7px] text-[#555]"><use href="#caret" /></svg></button>
            <button aria-label="动态输入" class="flex h-[31px] w-[45px] items-center justify-between border border-[#3f97f0] bg-white px-1"><svg class="h-5 w-[22px]" viewBox="0 0 22 20"><path d="M0 6h9M4.500 2v8" stroke="#4a8fdc" stroke-width="1.400" /><path d="M8 12h13v6H8z" fill="#3f83d6" /><path d="M10 15h1" stroke="#fff" stroke-width="2" /></svg><svg class="h-[5px] w-[7px] text-[#555]"><use href="#caret" /></svg></button>
            <button aria-label="构件高度" class="flex h-[31px] w-[31px] items-center justify-center border border-[#9a9a9a] bg-[#cdcdcf]"><svg class="h-[18px] w-5" viewBox="0 0 20 18" fill="none" stroke="#555" stroke-width="1.500"><path d="M1 1h18v16H1zM4 5h4M12 5h4M4 13h4M12 13h4M6 5v8M14 5v8M6 9h8" /></svg></button>
            <button aria-label="旋转视图" class="flex h-[31px] w-[31px] items-center justify-center border border-[#9a9a9a] bg-[#cdcdcf]"><svg class="h-[18px] w-5" viewBox="0 0 20 18" fill="none" stroke="#555" stroke-width="1.500"><path d="M1 1h8v16H1zM9 9h10v8H9zM12 4q4 0 4 4M14 2l-3 2 3 3" /></svg></button>
            <button class="h-[31px] w-[76px] border border-[#9a9a9a] bg-[#cdcdcf]">折线选择</button>
            <div class="relative"><select aria-label="工作平面" class="h-[31px] w-[113px] appearance-none border border-[#c5c8cd] bg-white pl-1 text-black"><option>无工作平面</option></select><svg class="pointer-events-none absolute right-[6px] top-[13px] h-[5px] w-[7px] text-[#555]"><use href="#caret" /></svg></div>
            <span>按鼠标左键指定第一个角点，或拾取构件图元</span>
        </div>
    </section>

    <!-- Windows taskbar -->
    <footer class="flex h-[50px] shrink-0 items-center bg-linear-to-r from-[#1c1b29] via-[#17204a] to-[#1c1b26] text-white">
        <button aria-label="开始" class="flex w-[60px] justify-center"><svg class="h-5 w-5" viewBox="0 0 20 20" fill="#fff"><path d="M0 3l8.500-1.200v7.700H0zM9.500 1.600L20 0v9.500H9.500zM0 10.500h8.500v7.700L0 17zM9.500 10.500H20V20L9.500 18.400z" /></svg></button>
        <button aria-label="搜索" class="flex w-[60px] justify-center"><svg class="h-5 w-5" viewBox="0 0 20 20" fill="none" stroke="#fff" stroke-width="1.400"><circle cx="13" cy="7" r="6.200" /><path d="M8.500 11.500L0.500 19.500" /></svg></button>
        <button aria-label="Cortana" class="flex w-[60px] justify-center"><svg class="h-5 w-5" viewBox="0 0 20 20"><circle cx="10" cy="10" r="8.500" fill="none" stroke="#fff" stroke-width="2.500" /></svg></button>
        <button aria-label="任务视图" class="flex w-[60px] justify-center"><svg class="h-5 w-5" viewBox="0 0 20 20" fill="none" stroke="#fff" stroke-width="1.300"><path d="M1 5h12v10H1zM1 1v2h12V1M1 20v-3h12v3M18.500 0v4M18.500 11v9" /><path d="M17 6h3v3h-3z" fill="#fff" stroke="none" /></svg></button>
        <button aria-label="浏览器" class="ml-1 flex w-[60px] justify-center"><svg class="h-[30px] w-[30px]" viewBox="0 0 30 30"><circle cx="15" cy="15" r="13" fill="#6cc22b" stroke="#fff" stroke-width="1.500" /><path d="M22 15H9q0-6 6.500-6T22 15zM9 15q1 6 6.500 6 4 0 6-3" fill="none" stroke="#fff" stroke-width="3.200" /><path d="M4 29Q-2 14 27 1l-3 1Q6 13 4 29z" fill="#4ba01a" /></svg></button>
        <button aria-label="文件资源管理器" class="ml-[7px] mr-1.5 flex h-full w-[51px] items-center justify-center border-b-3 border-[#76b9ed]"><svg class="h-6 w-7" viewBox="0 0 28 24"><path d="M0 0h11l2 3h15v20H0z" fill="#e5a823" /><path d="M0 5h28v18H0z" fill="#fcd462" /><path d="M5 24V14q0-2 2-2h14q2 0 2 2v10h-5v-5h-8v5z" fill="#3b96dd" /></svg></button>
        <button aria-label="GJG2021" class="flex h-full w-[61px] items-center justify-center border-b-3 border-[#76b9ed] bg-[#4a4a58]"><svg class="h-[30px] w-[30px]"><use href="#logo" /></svg></button>
        <button aria-label="查找" class="ml-1.5 flex h-full w-[51px] items-center justify-center border-b-3 border-[#76b9ed]"><svg class="h-7 w-7" viewBox="0 0 28 28" fill="none" stroke="#f98a0a" stroke-width="4"><circle cx="17" cy="11" r="8.500" /><path d="M11 17l-9 9" stroke-linecap="round" /></svg></button>

        <div class="ml-auto flex items-center">
            <span class="mr-[21px] flex h-5 w-[18px] items-center justify-center bg-white text-black">拼</span>
            <div class="flex items-center [&>svg]:mx-[5px] [&>svg]:h-5 [&>svg]:w-5">
                <svg viewBox="0 0 20 20" fill="none" stroke="#e8382d" stroke-width="2.400"><path d="M1 4h6l2 12L13 7l2 9 4-13H9" /></svg>
                <svg viewBox="0 0 20 20"><ellipse cx="8" cy="7" rx="8" ry="6.500" fill="#2fc75d" /><path d="M3 12l-1 3 4-2z" fill="#2fc75d" /><ellipse cx="14" cy="13" rx="6" ry="5" fill="#e8e8e8" /><path d="M5 5h1M10 5h1M12 12h1M15.500 12h1" stroke="#333" stroke-width="1.500" /></svg>
                <svg viewBox="0 0 20 20"><path d="M8 2l3 0-5 17H0z" fill="#2b4bb5" /><path d="M10 4l3 13H8z" fill="#5f6fd0" /><path d="M13 9l6 10h-7z" fill="#e0243a" /></svg>
                <svg viewBox="0 0 20 20"><path d="M18 4Q9-2 3 6T7 19q8 2 10-8h-6q2 4-2 4-4-2-1-8 4-4 9 0z" fill="#1b8fe8" /></svg>
                <svg viewBox="0 0 20 20"><path d="M0 1h20v18H0z" fill="#353c33" /><path d="M2 10q7-9 16-4v9H9Q4 15 2 10z" fill="#76b900" /><circle cx="10" cy="10" r="3.500" fill="none" stroke="#234" stroke-width="1.500" /></svg>
                <svg viewBox="0 0 20 20"><path d="M10 0l9 3q0 12-9 17Q1 15 1 3z" fill="#fff" /><path d="M10 2l7 2q0 9-7 14Q3 13 3 4z" fill="#2a7fd0" /><path d="M14 6L8 8l4 3-5 3" fill="none" stroke="#fff" stroke-width="2" /></svg>
                <svg viewBox="0 0 20 20" fill="none" stroke="#f98a0a" stroke-width="3"><circle cx="12" cy="8" r="5.500" /><path d="M8 12l-5 6" stroke-linecap="round" /></svg>
                <svg viewBox="0 0 20 20"><path d="M9 0l9 3q0 11-9 16Q0 14 0 3z" fill="#fff" /><path d="M9 0v19M0 8h18" stroke="#1c1b29" stroke-width="1.500" /><path d="M14 8l6 12H8z" fill="#fbc02d" /><path d="M14 12v4M14 17v1.500" stroke="#000" stroke-width="1.500" /></svg>
                <svg viewBox="0 0 20 20" fill="none" stroke="#fff" stroke-width="1.300"><path d="M7 6h11v9H7zM19.500 9v3M1 3v3h4V3M3 6v8h4" /><path d="M10 8h6v5h-6z" fill="#fff" /></svg>
                <svg viewBox="0 0 20 20" fill="none" stroke="#fff" stroke-width="1.200"><path d="M1 7h3l4-4v14l-4-4H1zM11 8q1 2 0 4M13.500 6q2.500 4 0 8" /><path d="M16 4q4 6 0 12" stroke="#999" /></svg>
                <svg viewBox="0 0 20 20" fill="none" stroke="#fff" stroke-width="1.300"><path d="M2 18Q3 4 17 3M6 18q0-10 11-11M10 18q0-6 7-7M14 18q0-3 3-3" /></svg>
                <svg viewBox="0 0 20 20"><path d="M9 0q1 3 4 4 6 3 6 8 0 8-9 8t-9-8q0-6 6-8 3-1 2-4z" fill="#5db5ee" /><path d="M9 8v3M13 8v3" stroke="#fff" stroke-width="1.800" /></svg>
                <svg viewBox="0 0 20 20"><path d="M4 10q-4 3-3 7l3-2v4h10V10z" fill="#d9286a" /><ellipse cx="9" cy="7" rx="5.500" ry="6.500" fill="#111" /><path d="M9 3l5-3 3 3-3 2z" fill="#e0208a" /><ellipse cx="9" cy="14" rx="4" ry="4.500" fill="#fff" /><path d="M7 5h1M10 5h1" stroke="#fff" stroke-width="2" /><path d="M6 8h6l-3 2z" fill="#f9a825" /><circle cx="14.500" cy="14.500" r="4.500" fill="#fff" stroke="#e23b22" stroke-width="1.500" /><path d="M11.500 11.500l6 6" stroke="#e23b22" stroke-width="1.500" /></svg>
            </div>
            <div class="ml-2 text-center text-base leading-[23px]">17:08<br>2021-04-20</div>
            <svg class="ml-[27px] h-[30px] w-7" viewBox="0 0 28 30"><path d="M2 6v20M7 26V11l5.500 9 5.500-9v15M23 12v14" fill="none" stroke="#fff" stroke-width="2.800" /><circle cx="23.500" cy="5" r="4.500" fill="#f5420b" /></svg>
            <svg class="ml-[29px] h-5 w-5" viewBox="0 0 20 20" fill="none" stroke="#fff" stroke-width="1.300"><path d="M1 1h18v15h-6l-3 3v-3H1z" /></svg>
            <div class="ml-6 mr-[7px] h-[50px] w-px bg-[#55566a]"></div>
        </div>
    </footer>

    <script>
        const line = 'fill="none" stroke="#4a8fdc" stroke-width="1.600"';
        const types = [
            ['次构件'],
            ['系', `<path d="M1 10h18M5 6.500L1 10l4 3.500M15 6.500l4 3.500-4 3.500" ${line}/><path d="M4 8.500h12v3H4z" fill="#7fb0ec"/>`],
            ['檩', `<path d="M1 1l14 12 3 6h-5L3 8z" fill="#8dbcf4" stroke="#4a8fdc"/><path d="M3 3l11 12" ${line}/>`],
            ['隅', `<path d="M0 4h20M0 8h20M1 2v8M19 2v8M4 8l6 7 6-7" ${line}/>`],
            ['拉', `<path d="M0 3h6l9 12h5" fill="none" stroke="#4a8fdc" stroke-width="3"/>`],
            ['天', `<path d="M3 10l8-8v8l-8 8zM8 11l8-8v8l-8 8z" fill="#8dbcf4" stroke="#3f7fd0"/>`],
            ['支', `<path d="M2 2v16M5 2v16M15 2v16M18 2v16" ${line}/><path d="M5 4l10 12M15 4L5 16" stroke="#b0735a" stroke-width="2"/>`],
            ['栏', `<path d="M3 2v17M10 2v17M17 2v17M0 7h20M0 13h20M1 2h4M8 2h4M15 2h4" ${line}/>`],
            ['门', `<path d="M3 19V2h14v17h-3V5H6v14zM12 10v2" ${line}/>`],
            ['窗', `<path d="M3 3h14v14H3zM10 3v14M3 10h14M7 8h1M12 8h1" ${line}/>`],
            ['撑', `<path d="M0 10h20" ${line}/><path d="M4 7h12v6H4z" fill="#a9ccf5" stroke="#4a8fdc"/>`],
            ['组合构件'],
            ['巨', `<path d="M3 5v11l4 3h6l4-3V5" fill="#a9ccf5" stroke="#4a8fdc"/><ellipse cx="10" cy="5" rx="7" ry="4" fill="#fff" stroke="#4a8fdc"/><path d="M7 9v10M13 9v10" ${line}/>`],
            ['钢', `<path d="M2 1v18M18 1v18M0 3h20M0 17h20" ${line}/><path d="M6 6h8v8H6z" fill="#d5e6fb" stroke="#4a8fdc"/>`],
            ['钢', `<path d="M10 1l8 8-8 7-8-7z" fill="#8dbcf4" stroke="#4a8fdc"/><path d="M2 9v7M18 9v7M10 16v3" ${line}/>`],
            ['电', `<path d="M4 2h12v16H4z" fill="#a9ccf5" stroke="#4a8fdc" stroke-width="2"/><path d="M7 5h6v9H7z" fill="#fff" stroke="#4a8fdc"/>`],
            ['钢', `<path d="M1 11l4 1v-4l4 1V5l4 1V2h6v6l-4 1v3l-4 1v3l-5 3-5-3z" fill="#5a9dea"/>`],
            ['转', `<path d="M0 5h20M0 15h20M3 5l4 6 3-6 4 6 3-6" fill="none" stroke="#6ba6ea" stroke-width="1.300"/>`],
            ['钢', `<path d="M4 8V4q0-2 2-2t2 2v15M8 4q0-3 2.500-3T13 4v14M8 9h5M8 13h6M8 17h6" ${line}/>`],
            ['异', `<path d="M10 1l3 6v9H7V7z" fill="#8dbcf4" stroke="#3f7fd0"/><path d="M0 12l7-6M20 12l-7-6" ${line}/><path d="M0 16h20v3H0z" fill="#5a9dea"/>`],
            ['柱', `<path d="M1 0v20M4 0v20M16 0v20M19 0v20" ${line}/><path d="M4 4l12 12M16 4L4 16" stroke="#f07a28" stroke-width="1.800"/>`],
            ['水', `<path d="M0 13L12 1M2 15L14 3M6 18L18 6M8 20L20 8" fill="none" stroke="#6ba6ea"/><path d="M10 3v14M2 10h17" stroke="#f07a28" stroke-width="2"/>`],
            ['钢', `<path d="M5 4l5-3 5 3v12l-5 3-5-3z" fill="#d5e6fb" stroke="#4a8fdc"/><path d="M8 8h4v10H8z" fill="#3f8ae0"/><path d="M10 1v7" ${line}/>`],
            ['自定义', '']
        ];
        document.getElementById('typeTree').innerHTML = types.map(([name, icon]) => {
            if (icon === undefined) return `<li class="flex h-[30px] shrink-0 items-center gap-1.5 pl-[3px]"><svg class="h-4 w-5 shrink-0"><use href="#folder"/></svg>${name}</li>`;
            if (icon === '') return `<li class="flex h-[30px] shrink-0 items-center pl-[54px]">${name}</li>`;
            const bg = name === '支' ? 'bg-[#c5d8f2]' : '';
            return `<li class="my-0.5 ml-[50px] flex h-[26px] shrink-0 items-center gap-[7px] pl-1 ${bg}"><svg class="h-5 w-5 shrink-0" viewBox="0 0 20 20">${icon}</svg>${name}</li>`;
        }).join('');

        // state: 'on' | 'part' | 'off' | 'disabled'
        function checkbox(label, state) {
            const fill = state === 'on' ? 'bg-[#5aa7f8] border-[#5aa7f8]' : state === 'disabled' ? 'bg-[#eee] border-[#b0b0b0]' : 'bg-white border-[#8a8a8a]';
            let mark = '';
            if (state === 'on') mark = '<svg class="pointer-events-none absolute inset-0 h-full w-full" viewBox="0 0 18 18"><path d="M4.500 8.500l3.500 3.500 6-6.500" fill="none" stroke="#fff" stroke-width="2.500"/></svg>';
            if (state === 'part') mark = '<span class="pointer-events-none absolute inset-[3px] rounded-xs border border-[#5aa7f8] bg-[#a0cbfb]"></span>';
            return `<span class="relative mx-auto block h-[18px] w-[18px]"><input type="checkbox" aria-label="${label}" class="block h-[18px] w-[18px] appearance-none rounded-[3px] border ${fill}" ${state === 'on' ? 'checked' : ''} ${state === 'disabled' ? 'disabled' : ''}>${mark}</span>`;
        }

        const box = sign => `<i class="relative z-1 flex h-4 w-4 shrink-0 items-center justify-center rounded-sm border border-[#888] bg-white"><svg class="h-1.5 w-1.5" viewBox="0 0 6 6"><path d="${sign === '+' ? 'M0 3h6M3 0v6' : 'M0 3h6'}" stroke="#333"/></svg></i>`;

        const props = [
            [1, '名称', 'ZC-11', false, 'text-[#2f62ff]'], [2, '规格', 'D20', true, ''], [3, '结构类别', '水平支撑', true, 'text-[#2f62ff]'],
            [4, '清单类型', '钢支撑', true, ''], [5, '归属', '', false, ''], [6, '材质', 'Q235B', true, ''],
            [7, '+除锈防腐', '', false, ''], [12, '+防火涂料', '', false, ''], [15, '+标高属性', '', false, ''], [18, '+显示样式', '', false, ''],
            [21, '定额子目', '', true, ''], [22, '备注', '', true, '']
        ];
        document.getElementById('props').innerHTML = props.map(([no, name, value, extra, color]) => `
            <tr class="h-[26px]">
                <td class="border-b border-r border-[#c5c8cd] bg-[#eee] text-center text-[#444]">${no}</td>
                <td class="border-b border-r border-[#d4d4d4] pl-1 ${color}">${name[0] === '+' ? `<span class="flex items-center gap-[7px]">${box('+')}${name.slice(1)}</span>` : name}</td>
                <td class="border-b border-r border-[#d4d4d4] pl-1">${value}</td>
                <td class="border-b border-r border-[#d4d4d4]">${extra ? checkbox(name, 'off') : ''}</td>
            </tr>`).join('');

        const checks = Array(17).fill('屋面支撑花...');
        checks[7] = 'ZC-11[301...';
        checks[8] = checks[9] = '花篮D20+...';
        document.getElementById('checks').innerHTML = checks.map((text, i) => `
            <li class="flex items-center pl-[51px]">
                <span class="w-[95px]">${text}</span>
                <button aria-label="定位" class="flex h-full w-[22px] items-center justify-center ${i === 5 ? 'bg-[#d0e5fc]' : ''}"><svg class="h-[17px] w-[17px]"><use href="#hammer"/></svg></button>
                <button aria-label="忽略" class="ml-0.5"><svg class="h-[17px] w-4"><use href="#docminus"/></svg></button>
            </li>`).join('');

        const display = [
            [0, '所有构件', 'part', 'off'], [1, '轴线', 'off', 'disabled'], [2, '轴网', 'off', 'disabled'], [2, '辅助轴线', 'off', 'disabled'],
            [1, '主构件', 'part', 'off'], [2, '钢柱', 'off', 'off'], [2, '钢梁', 'on', 'off'], [2, '吊车梁', 'off', 'off'],
            [2, '上弦/外弦', 'off', 'off'], [2, '下弦/内弦', 'off', 'off'], [2, '腹杆', 'off', 'off'], [2, '斜腹杆', 'off', 'off'],
            [2, '环梁', 'off', 'off'], [2, '主拱', 'off', 'off'], [2, '螺栓球', 'off', 'off'], [2, '焊接球', 'off', 'off'],
            [1, '次构件', 'part', 'off'], [2, '系杆', 'on', 'off'], [2, '檩条', 'off', 'off'], [2, '隅撑', 'off', 'off'],
            [2, '拉条', 'off', 'off'], [2, '天沟', 'off', 'off'], [2, '支撑', 'on', 'off'], [2, '栏杆', 'off', 'off']
        ];
        const indent = ['pl-0.5', 'pl-3.5', 'pl-[22px]'];
        document.getElementById('display').innerHTML = display.map(([level, name, shown, named], i) => {
            const last = level === 2 && display[i + 1] && display[i + 1][0] < 2;
            const guides = (level > 0 ? '<b class="absolute inset-y-0 left-2.5 w-px bg-[#dcdcdc]"></b>' : '')
                + (level === 2 ? `<b class="absolute left-[22px] top-0 w-px bg-[#dcdcdc] ${last ? 'h-1/2' : 'h-full'}"></b>` : '');
            const lead = level === 2 ? '<b class="h-px w-5 bg-[#dcdcdc]"></b>' : box('-');
            const focus = name === '系杆' ? 'border-2 border-[#7f8387]' : 'border-b border-r border-[#d4d4d4]';
            return `<tr class="h-[26px]">
                <td class="relative border-b border-r border-[#d4d4d4] ${indent[level]}">${guides}<span class="flex items-center gap-2">${lead}${name}</span></td>
                <td class="${focus}">${checkbox('显示图元 ' + name, shown)}</td>
                <td class="border-b border-r border-[#d4d4d4]">${checkbox('显示名称 ' + name, named)}</td>
            </tr>`;
        }).join('');
    </script>
</body>

</html>
